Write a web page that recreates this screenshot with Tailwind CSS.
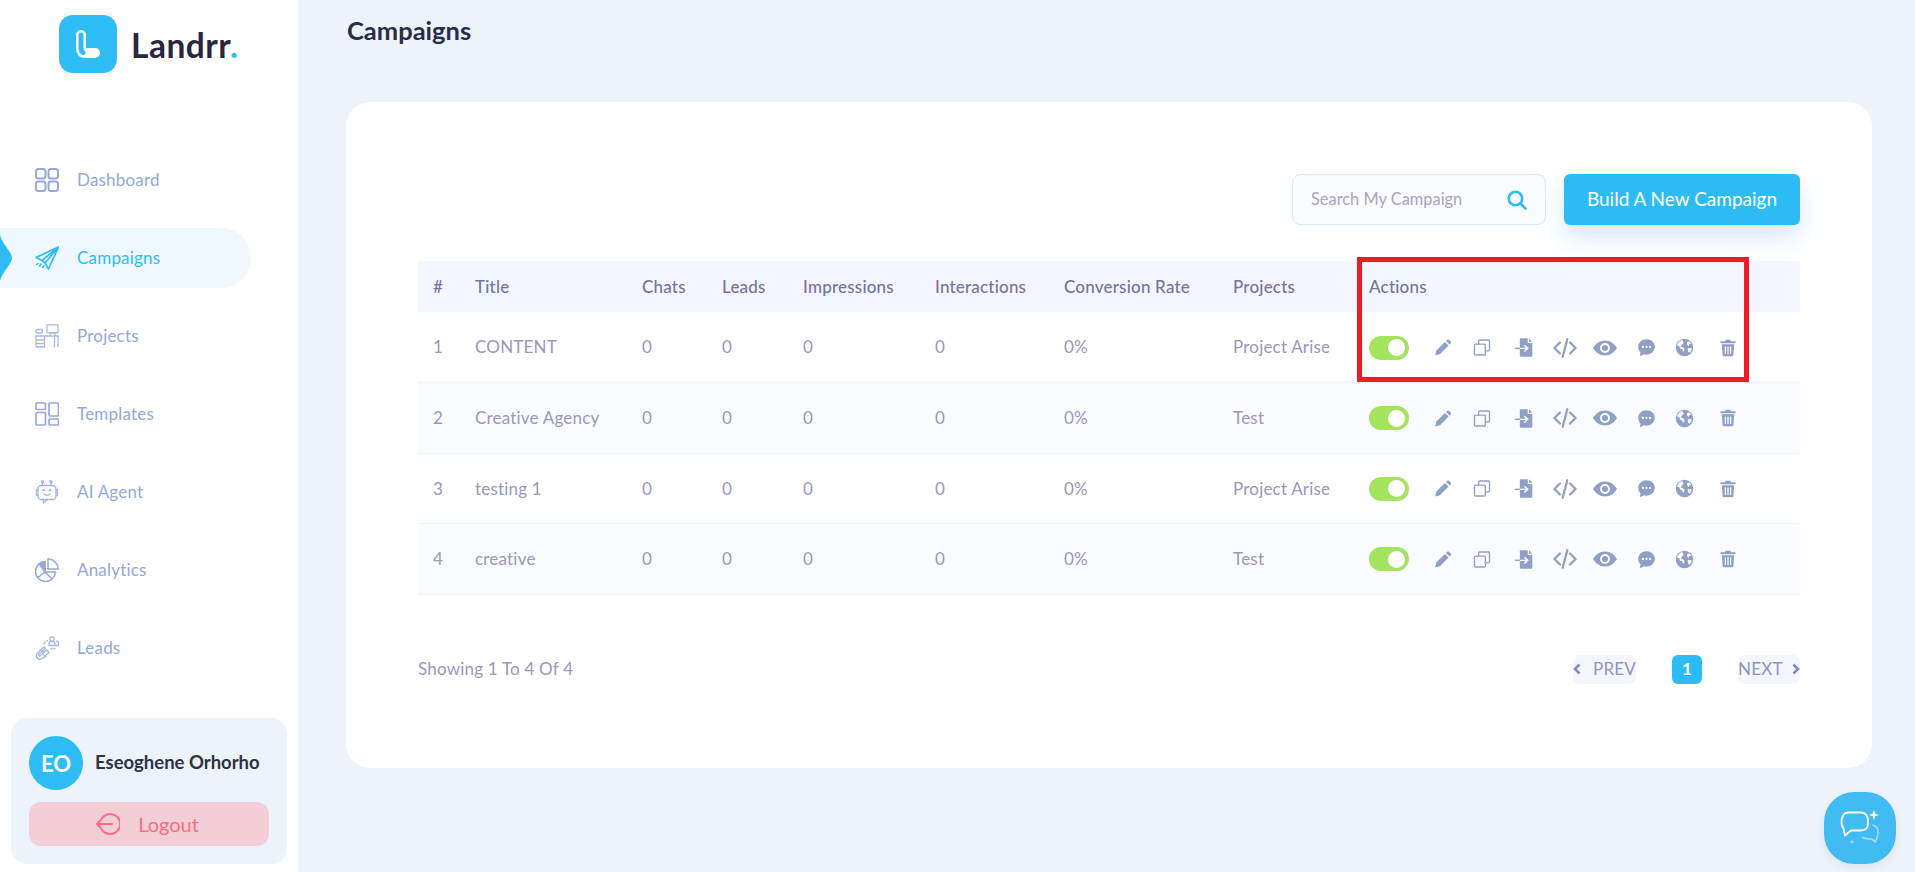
<!DOCTYPE html>
<html lang="en">
<head>
<meta charset="utf-8">
<title>Campaigns</title>
<script src="https://cdn.jsdelivr.net/npm/@tailwindcss/browser@4"></script>
</head>
<body class="m-0 h-[872px] w-[1915px] overflow-hidden bg-[#ecf3fb] font-['Lato','Open_Sans',sans-serif]">
<svg class="hidden" aria-hidden="true">
  <symbol id="i-pencil" viewBox="0 0 24 24"><path fill="#8f9fc5" d="M1.500 22.500l1.600-6.400L14.600 4.600l4.800 4.800L7.900 20.900zM16 3.200l1.600-1.500c.7-.7 1.700-.7 2.400 0l2.300 2.300c.7.7.7 1.700 0 2.400L20.800 8z"/></symbol>
  <symbol id="i-copy" viewBox="0 0 24 24"><g fill="none" stroke="#8f9fc5" stroke-width="1.800" stroke-linejoin="round" stroke-linecap="round"><rect x="2" y="7.500" width="14.500" height="14.500" rx="1.500"/><path d="M7.500 7.500V3.500A1.500 1.500 0 0 1 9 2h11.500A1.500 1.500 0 0 1 22 3.500V15a1.500 1.500 0 0 1-1.500 1.500h-4"/></g></symbol>
  <symbol id="i-file" viewBox="0 0 24 24"><path fill="#8f9fc5" d="M7 1h9.500v5.500H22V21.500A1.500 1.500 0 0 1 20.500 23h-12A1.500 1.500 0 0 1 7 21.500zM18 1l4 4h-4z"/><path fill="none" stroke="#fff" stroke-width="1.700" d="M7 13h9M12.500 9.300L16.500 13l-4 3.700"/><path fill="none" stroke="#8f9fc5" stroke-width="1.700" d="M1 13h6"/></symbol>
  <symbol id="i-code" viewBox="0 0 26 24"><g fill="none" stroke="#8f9fc5" stroke-width="2.500" stroke-linecap="round" stroke-linejoin="round"><path d="M7.500 6L1.500 12l6 6M18.500 6l6 6-6 6M15.500 2.500l-5 19"/></g></symbol>
  <symbol id="i-eye" viewBox="0 0 24 16"><path fill="#8f9fc5" fill-rule="evenodd" d="M12 .5C6.500.5 2.500 4 0 8c2.500 4 6.500 7.500 12 7.500S21.500 12 24 8C21.500 4 17.500.5 12 .5zM12 3a5 5 0 1 1 0 10a5 5 0 0 1 0-10z"/><circle cx="12" cy="8" r="3" fill="#8f9fc5"/></symbol>
  <symbol id="i-chat" viewBox="0 0 24 24"><path fill="#8f9fc5" d="M12 1.500c6 0 10.500 4.300 10.500 9.700S18 21 12 21c-1 0-2.200-.1-3.200-.4L3.500 23l1-4.500C2.700 16.600 1.500 14 1.500 11.200 1.500 5.800 6 1.500 12 1.500z"/><circle cx="7.500" cy="11.300" r="1.400" fill="#fff"/><circle cx="12" cy="11.300" r="1.400" fill="#fff"/><circle cx="16.500" cy="11.300" r="1.400" fill="#fff"/></symbol>
  <symbol id="i-globe" viewBox="0 0 24 24"><circle cx="12" cy="12" r="11" fill="#8f9fc5"/><path fill="#fff" d="M9 2.500C6 3.500 3.500 6 2.500 9l3 1.500 1 3 2.500.5 1 3.500 1.500-1 .5-3-2.500-2-2-.5 1-2.500L11 6zM15 5.500l3-1.500 2.500 3-2.500 1-.5 2-2-1.500zM16 13l4.500-.5.500 2.500-2.500 3.500-2-1.500z"/></symbol>
  <symbol id="i-trash" viewBox="0 0 24 24"><path fill="#8f9fc5" d="M9 1h6l1 2h6v2.500H2V3h6zM3.700 7h16.600l-1.100 14.500A1.700 1.700 0 0 1 17.500 23h-11a1.700 1.700 0 0 1-1.700-1.500z"/><path stroke="#fff" stroke-width="1.600" d="M8.500 10v10M12 10v10M15.500 10v10"/></symbol>
</svg>

<div class="flex h-[872px]">
  <aside class="flex w-[298px] shrink-0 flex-col bg-white">
    <div class="flex h-[141px] items-start gap-[14px] pl-[59px] pt-[15px]">
      <svg class="h-[58px] w-[58px]" viewBox="0 0 58 58"><rect width="58" height="58" rx="14" fill="#2dbdf4"/><path d="M22 20v13c0 3.500 1.500 5 5 5h9" fill="none" stroke="#fff" stroke-width="10" stroke-linecap="round"/><path d="M22 20v13c0 2.500.5 3.500 2 4.500" fill="none" stroke="#2dbdf4" stroke-width="5" stroke-linecap="round"/></svg>
      <div class="mt-[8px] text-[33.500px] font-bold leading-[44px] tracking-[0.5px] text-[#2a2640]">Landrr<span class="text-[#2dbdf4]">.</span></div>
    </div>
    <nav class="flex flex-col text-[17px] tracking-[0.2px] text-[#94a7d8]">
      <a class="flex h-[78px] items-center gap-[18px] pl-[35px]">
        <svg class="h-6 w-6" viewBox="0 0 24 24" fill="none" stroke="#94a8da" stroke-width="2"><rect x="1" y="1" width="9.500" height="9.500" rx="2.500"/><rect x="13.500" y="1" width="9.500" height="9.500" rx="2.500"/><rect x="1" y="13.500" width="9.500" height="9.500" rx="2.500"/><rect x="13.500" y="13.500" width="9.500" height="9.500" rx="2.500"/></svg>
        Dashboard
      </a>
      <div class="flex h-[78px] items-center">
        <a class="relative flex h-[60px] w-[251px] items-center gap-[18px] rounded-r-[30px] bg-[#f0f8ff] pl-[35px] text-[#2dbdf4]">
          <svg class="absolute left-0 top-[7px] h-[46px] w-[12px]" viewBox="0 0 12 46"><path d="M0 0C2 9 12 17 12 23C12 29 2 37 0 46z" fill="#2dbdf4"/></svg>
          <svg class="h-6 w-6" viewBox="0 0 24 24" fill="none" stroke="#2dbdf4" stroke-width="1.700" stroke-linejoin="round" stroke-linecap="round"><path d="M23.500 1L1 11.500l6 3L23.500 1l-10 22-3.500-6-3-2.500M10 17L23.500 1"/><path d="M1.500 18.500l1.500-1M6 18l-1.500 2M7.500 21.500L9 20" stroke-width="1.500"/></svg>
          Campaigns
        </a>
      </div>
      <a class="flex h-[78px] items-center gap-[18px] pl-[35px]">
        <svg class="h-6 w-6" viewBox="0 0 24 24" fill="none" stroke="#a9b9e2" stroke-width="1.300"><rect x="12" y="0.800" width="11" height="8"/><path d="M15 12v-3h5v3M0 12h24M1 12v11M23 12v11M19.500 12v11M1 16h8.500v7H1M1 19.500h8.500M9.500 12v4"/><rect x="1" y="5.500" width="6.500" height="3.500" rx="1"/></svg>
        Projects
      </a>
      <a class="flex h-[78px] items-center gap-[18px] pl-[35px]">
        <svg class="h-6 w-6" viewBox="0 0 24 24" fill="none" stroke="#94a8da" stroke-width="1.700" stroke-linejoin="round"><rect x="1" y="1" width="9.500" height="6.500" rx="1"/><rect x="1" y="10.500" width="9.500" height="12.500" rx="1"/><rect x="14" y="1" width="9.500" height="13" rx="1"/><rect x="14" y="17" width="9.500" height="6" rx="1"/></svg>
        Templates
      </a>
      <a class="flex h-[78px] items-center gap-[18px] pl-[35px]">
        <svg class="h-6 w-6" viewBox="0 0 24 24" fill="none" stroke="#a2b4e0" stroke-width="1.300" stroke-linecap="round" stroke-linejoin="round"><rect x="3" y="5.500" width="18" height="14" rx="3.500"/><path d="M3 9.500H1.500v6H3M21 9.500h1.500v6H21M7.500 5.500V3M16 5.500V3M8 19.500l.5 3.500 4-3.500"/><circle cx="7.500" cy="1.800" r="1.100"/><circle cx="16" cy="1.800" r="1.100"/><path d="M7.500 10.500l1 -1 1 1M14 10.500l1-1 1 1M9 14c1.500 1.500 4.500 1.500 6 0"/></svg>
        AI Agent
      </a>
      <a class="flex h-[78px] items-center gap-[18px] pl-[35px]">
        <svg class="h-6 w-6" viewBox="0 0 24 24" fill="none" stroke="#94a8da" stroke-width="1.500" stroke-linejoin="round"><path d="M10 3.500a10 10 0 1 0 10.500 10.500H10zM10 14L3 19.500M10 14l7 7"/><path d="M10 3.500A10 10 0 0 0 4 5.700L10 14z" fill="#94a8da"/><path d="M13 .8a10.500 10.500 0 0 1 10.200 10.200H13z"/></svg>
        Analytics
      </a>
      <a class="flex h-[78px] items-center gap-[18px] pl-[35px]">
        <svg class="h-6 w-6" viewBox="0 0 24 24" fill="none" stroke="#a2b4e0" stroke-width="1.300" stroke-linecap="round" stroke-linejoin="round"><path d="M9 11L2.500 17a3.700 3.700 0 0 0 5.200 5.300L14 16.500l-2.500-2.500-6 5.500a1 1 0 0 1-1.500-1.500l6.500-5.500zM6 13.500l2.500 2.500M8.500 18.500l2.500 2.500"/><circle cx="17" cy="3" r="2.200"/><path d="M14 9.500V7.500c0-1 1-1.800 2-1.800h2c1 0 2 .8 2 1.800v2zM20 9.500h3.500V7c0-1-1-1.800-2-1.800M9 8l1-2M12 5l.5-.5M16 13l1.500-1M19 13l1-.5"/></svg>
        Leads
      </a>
    </nav>
    <div class="mx-[11px] mb-[8px] mt-auto h-[146px] rounded-[16px] bg-[#ecf3fb] px-[18px] pt-[18px]">
      <div class="flex items-center gap-[12px]">
        <div class="flex h-[54px] w-[54px] items-center justify-center rounded-full bg-[#2dbdf4] text-[22px] font-bold text-white">EO</div>
        <div class="text-[18.500px] font-bold text-[#2f3145]">Eseoghene Orhorho</div>
      </div>
      <button class="mt-[12px] flex h-[44px] w-[240px] items-center justify-center gap-[18px] rounded-[12px] bg-[#f3ced6] pr-[3px] pb-[1px] text-[20px] text-[#ff6b81]">
        <svg class="h-[24px] w-[24px]" viewBox="0 0 24 24" fill="none" stroke="#ff6b81" stroke-width="2" stroke-linecap="round" stroke-linejoin="round"><path d="M5.500 7A10 10 0 1 1 5.500 17M1 12h15M4.500 8.500L1 12l3.500 3.500"/></svg>
        Logout
      </button>
    </div>
  </aside>

  <main class="flex-1 pl-[48px] pr-[42px]">
    <h1 class="flex h-[62px] items-center pb-[1px] pl-[1px] text-[25.500px] font-bold text-[#2a2d45]">Campaigns</h1>
    <section class="mt-[40px] h-[666px] w-[1526px] rounded-[24px] bg-white px-[72px] pt-[72px]">
      <div class="flex justify-end gap-[18px]">
        <div class="flex h-[51px] w-[254px] items-center justify-between rounded-[8px] border border-[#d9e9f3] bg-[#f9fbff] pl-[18px] pr-[18px] text-[16.400px] text-[#a9a3c3]">
          <span>Search My Campaign</span>
          <svg class="h-[20px] w-[20px]" viewBox="0 0 20 20" fill="none" stroke="#2dbdf4" stroke-width="2.600" stroke-linecap="round"><circle cx="8.500" cy="8.500" r="6.700"/><path d="M13.500 13.500l5 5"/></svg>
        </div>
        <button class="h-[51px] w-[236px] rounded-[6px] bg-[#2cbbf3] text-[19px] text-white shadow-[0_12px_24px_rgba(60,150,235,0.22)]">Build A New Campaign</button>
      </div>

      <div class="relative mt-[36px]">
        <table class="w-[1382px] table-fixed border-collapse text-left text-[17px] tracking-[0.2px] text-[#9a96bc]">
          <colgroup><col class="w-[42px]"><col class="w-[167px]"><col class="w-[80px]"><col class="w-[81px]"><col class="w-[132px]"><col class="w-[129px]"><col class="w-[169px]"><col class="w-[136px]"><col></colgroup>
          <thead>
            <tr class="h-[51px] bg-[#f3f6fe] text-[#74749f]">
              <th class="pl-[15px] font-medium">#</th><th class="pl-[15px] font-medium">Title</th><th class="pl-[15px] font-medium">Chats</th><th class="pl-[15px] font-medium">Leads</th><th class="pl-[15px] font-medium">Impressions</th><th class="pl-[15px] font-medium">Interactions</th><th class="pl-[15px] font-medium">Conversion Rate</th><th class="pl-[15px] font-medium">Projects</th><th class="pl-[15px] font-medium">Actions</th>
            </tr>
          </thead>
          <tbody>
            <tr class="h-[70.500px] border-b border-[#edf2fd]">
              <td class="pl-[15px]">1</td><td class="pl-[15px]">CONTENT</td><td class="pl-[15px]">0</td><td class="pl-[15px]">0</td><td class="pl-[15px]">0</td><td class="pl-[15px]">0</td><td class="pl-[15px]">0%</td><td class="pl-[15px]">Project Arise</td>
              <td class="pl-[15px]"><div class="flex items-center pt-[1px]"><span class="mr-[25px] flex h-[24px] w-[40px] items-center justify-end rounded-full bg-[#a3e35d] pr-[4px]"><span class="h-[17px] w-[17px] rounded-full bg-white"></span></span><svg class="mr-[21px] h-[19px] w-[18px]"><use href="#i-pencil"/></svg><svg class="mr-[23px] h-[19px] w-[18px]"><use href="#i-copy"/></svg><svg class="mr-[19px] h-[21px] w-[20px]"><use href="#i-file"/></svg><svg class="mr-[16px] h-[22px] w-[24px]"><use href="#i-code"/></svg><svg class="mr-[20px] h-[16px] w-[24px]"><use href="#i-eye"/></svg><svg class="mr-[19px] h-[19px] w-[19px]"><use href="#i-chat"/></svg><svg class="mr-[25px] h-[19px] w-[19px]"><use href="#i-globe"/></svg><svg class="h-[18px] w-[18px]"><use href="#i-trash"/></svg></div></td>
            </tr>
            <tr class="h-[70.500px] border-b border-[#edf2fd] bg-[#fafbff]">
              <td class="pl-[15px]">2</td><td class="pl-[15px]">Creative Agency</td><td class="pl-[15px]">0</td><td class="pl-[15px]">0</td><td class="pl-[15px]">0</td><td class="pl-[15px]">0</td><td class="pl-[15px]">0%</td><td class="pl-[15px]">Test</td>
              <td class="pl-[15px]"><div class="flex items-center pt-[1px]"><span class="mr-[25px] flex h-[24px] w-[40px] items-center justify-end rounded-full bg-[#a3e35d] pr-[4px]"><span class="h-[17px] w-[17px] rounded-full bg-white"></span></span><svg class="mr-[21px] h-[19px] w-[18px]"><use href="#i-pencil"/></svg><svg class="mr-[23px] h-[19px] w-[18px]"><use href="#i-copy"/></svg><svg class="mr-[19px] h-[21px] w-[20px]"><use href="#i-file"/></svg><svg class="mr-[16px] h-[22px] w-[24px]"><use href="#i-code"/></svg><svg class="mr-[20px] h-[16px] w-[24px]"><use href="#i-eye"/></svg><svg class="mr-[19px] h-[19px] w-[19px]"><use href="#i-chat"/></svg><svg class="mr-[25px] h-[19px] w-[19px]"><use href="#i-globe"/></svg><svg class="h-[18px] w-[18px]"><use href="#i-trash"/></svg></div></td>
            </tr>
            <tr class="h-[70.500px] border-b border-[#edf2fd]">
              <td class="pl-[15px]">3</td><td class="pl-[15px]">testing 1</td><td class="pl-[15px]">0</td><td class="pl-[15px]">0</td><td class="pl-[15px]">0</td><td class="pl-[15px]">0</td><td class="pl-[15px]">0%</td><td class="pl-[15px]">Project Arise</td>
              <td class="pl-[15px]"><div class="flex items-center pt-[1px]"><span class="mr-[25px] flex h-[24px] w-[40px] items-center justify-end rounded-full bg-[#a3e35d] pr-[4px]"><span class="h-[17px] w-[17px] rounded-full bg-white"></span></span><svg class="mr-[21px] h-[19px] w-[18px]"><use href="#i-pencil"/></svg><svg class="mr-[23px] h-[19px] w-[18px]"><use href="#i-copy"/></svg><svg class="mr-[19px] h-[21px] w-[20px]"><use href="#i-file"/></svg><svg class="mr-[16px] h-[22px] w-[24px]"><use href="#i-code"/></svg><svg class="mr-[20px] h-[16px] w-[24px]"><use href="#i-eye"/></svg><svg class="mr-[19px] h-[19px] w-[19px]"><use href="#i-chat"/></svg><svg class="mr-[25px] h-[19px] w-[19px]"><use href="#i-globe"/></svg><svg class="h-[18px] w-[18px]"><use href="#i-trash"/></svg></div></td>
            </tr>
            <tr class="h-[70.500px] border-b border-[#edf2fd] bg-[#fafbff]">
              <td class="pl-[15px]">4</td><td class="pl-[15px]">creative</td><td class="pl-[15px]">0</td><td class="pl-[15px]">0</td><td class="pl-[15px]">0</td><td class="pl-[15px]">0</td><td class="pl-[15px]">0%</td><td class="pl-[15px]">Test</td>
              <td class="pl-[15px]"><div class="flex items-center pt-[1px]"><span class="mr-[25px] flex h-[24px] w-[40px] items-center justify-end rounded-full bg-[#a3e35d] pr-[4px]"><span class="h-[17px] w-[17px] rounded-full bg-white"></span></span><svg class="mr-[21px] h-[19px] w-[18px]"><use href="#i-pencil"/></svg><svg class="mr-[23px] h-[19px] w-[18px]"><use href="#i-copy"/></svg><svg class="mr-[19px] h-[21px] w-[20px]"><use href="#i-file"/></svg><svg class="mr-[16px] h-[22px] w-[24px]"><use href="#i-code"/></svg><svg class="mr-[20px] h-[16px] w-[24px]"><use href="#i-eye"/></svg><svg class="mr-[19px] h-[19px] w-[19px]"><use href="#i-chat"/></svg><svg class="mr-[25px] h-[19px] w-[19px]"><use href="#i-globe"/></svg><svg class="h-[18px] w-[18px]"><use href="#i-trash"/></svg></div></td>
            </tr>
          </tbody>
        </table>
        <div class="pointer-events-none absolute left-[939px] top-[-4px] h-[125px] w-[392px] border-[5px] border-[#ed1c24]"></div>
      </div>

      <div class="mt-[60px] flex items-center justify-between text-[17px] tracking-[0.2px]">
        <span class="text-[#9a96bc]">Showing 1 To 4 Of 4</span>
        <div class="flex items-center text-[#8a96bd]">
          <a class="flex h-[29px] w-[63px] items-center justify-between rounded-[7px] bg-[#f4f6fe]"><svg class="h-[12px] w-[8px]" viewBox="0 0 8 12" fill="none" stroke="#7f8db8" stroke-width="2.500"><path d="M6.500 1.500L2 6l4.500 4.500"/></svg>PREV</a>
          <a class="ml-[36px] flex h-[29px] w-[30px] items-center justify-center rounded-[6px] bg-[#2cbbf3] font-bold text-white">1</a>
          <a class="ml-[36px] flex h-[29px] w-[62px] items-center justify-between rounded-[7px] bg-[#f4f6fe]">NEXT<svg class="h-[12px] w-[8px]" viewBox="0 0 8 12" fill="none" stroke="#7f8db8" stroke-width="2.500"><path d="M1.500 1.500L6 6l-4.500 4.500"/></svg></a>
        </div>
      </div>
    </section>
  </main>
</div>

<button class="fixed bottom-[8px] right-[19px] h-[72px] w-[72px] rounded-[30px] bg-[#41bbf2] shadow-[0_4px_10px_rgba(0,0,0,0.06)]">
  <svg class="h-[72px] w-[72px]" viewBox="0 0 72 72" fill="none" stroke-linecap="round" stroke-linejoin="round"><path d="M24 20.500h13c4 0 7 3 7 7.500v3c0 5-3 7.500-7 7.500H27l-6 5-1.500-7C18 35 17.500 33 17.500 29.500c0-5 2.500-9 6.500-9z" stroke="#fff" stroke-width="1.800"/><path d="M50 18l1.300 3.700L55 23l-3.700 1.300L50 28l-1.300-3.700L45 23l3.700-1.300z" fill="#fff"/><path d="M49 33c3 1 5 3 5 7 0 3-1 6-2.500 10l-4-3c-3 0-6 0-9-1.500" stroke="#a8dcf7" stroke-width="1.600"/><path d="M28 47.500l.7 1.800 1.800.7-1.800.7-.7 1.800-.7-1.800-1.800-.7 1.800-.7z" fill="#a8dcf7"/></svg>
</button>
</body>
</html>
